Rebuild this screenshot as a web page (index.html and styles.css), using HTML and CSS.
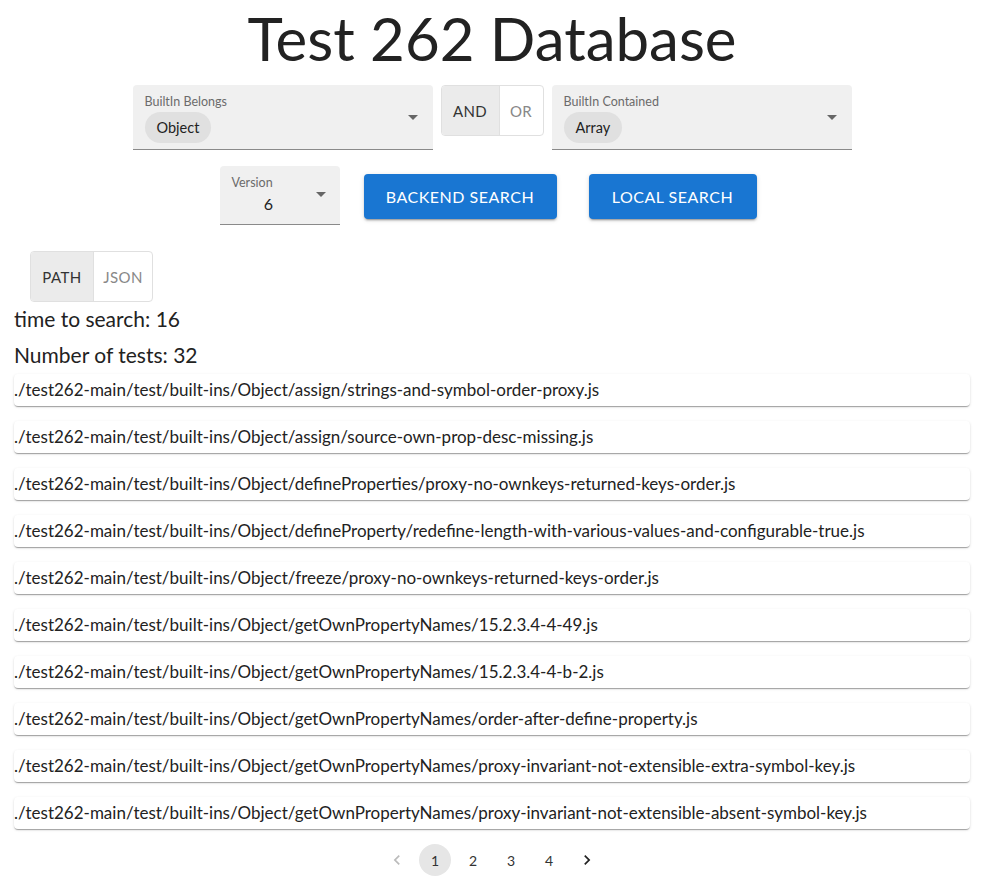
FILE: index.html
```html
<!DOCTYPE html>
<html>
<head>
<meta charset="utf-8">
<title>Test 262 Database</title>
<link rel="stylesheet" href="styles.css">
</head>
<body>
<div class="app">
  <h1 class="title">Test 262 Database</h1>

  <div class="row row-top">
    <div class="select wide">
      <div class="select-body">
        <span class="label">BuiltIn Belongs</span>
        <span class="chip">Object</span>
      </div>
      <span class="arrow"></span>
    </div>
    <div class="toggle">
      <span class="seg on">AND</span>
      <span class="seg">OR</span>
    </div>
    <div class="select wide">
      <div class="select-body">
        <span class="label">BuiltIn Contained</span>
        <span class="chip">Array</span>
      </div>
      <span class="arrow"></span>
    </div>
  </div>

  <div class="row row-second">
    <div class="select version">
      <div class="select-body">
        <span class="label">Version</span>
        <span class="value">6</span>
      </div>
      <span class="arrow"></span>
    </div>
    <button class="btn backend">Backend search</button>
    <button class="btn local">Local search</button>
  </div>

  <div class="toggle view-toggle">
    <span class="seg on">Path</span>
    <span class="seg">JSON</span>
  </div>

  <p class="stat stat-time">time to search: 16</p>
  <p class="stat stat-count">Number of tests: 32</p>

  <ul class="results">
    <li class="card">./test262-main/test/built-ins/Object/assign/strings-and-symbol-order-proxy.js</li>
    <li class="card">./test262-main/test/built-ins/Object/assign/source-own-prop-desc-missing.js</li>
    <li class="card">./test262-main/test/built-ins/Object/defineProperties/proxy-no-ownkeys-returned-keys-order.js</li>
    <li class="card">./test262-main/test/built-ins/Object/defineProperty/redefine-length-with-various-values-and-configurable-true.js</li>
    <li class="card">./test262-main/test/built-ins/Object/freeze/proxy-no-ownkeys-returned-keys-order.js</li>
    <li class="card">./test262-main/test/built-ins/Object/getOwnPropertyNames/15.2.3.4-4-49.js</li>
    <li class="card">./test262-main/test/built-ins/Object/getOwnPropertyNames/15.2.3.4-4-b-2.js</li>
    <li class="card">./test262-main/test/built-ins/Object/getOwnPropertyNames/order-after-define-property.js</li>
    <li class="card">./test262-main/test/built-ins/Object/getOwnPropertyNames/proxy-invariant-not-extensible-extra-symbol-key.js</li>
    <li class="card">./test262-main/test/built-ins/Object/getOwnPropertyNames/proxy-invariant-not-extensible-absent-symbol-key.js</li>
  </ul>

  <nav class="pagination">
    <span class="page nav disabled"><svg viewBox="0 0 24 24" width="20" height="20"><path d="M15.41 7.41 14 6l-6 6 6 6 1.41-1.41L10.83 12z" fill="currentColor"/></svg></span>
    <span class="page current">1</span>
    <span class="page">2</span>
    <span class="page">3</span>
    <span class="page">4</span>
    <span class="page nav"><svg viewBox="0 0 24 24" width="20" height="20"><path d="M10 6 8.59 7.41 13.17 12l-4.58 4.59L10 18l6-6z" fill="currentColor"/></svg></span>
  </nav>
</div>
</body>
</html>
```

FILE: styles.css
```css
* { box-sizing: border-box; }
html, body { margin: 0; padding: 0; background: #fff; }
body {
  font-family: Lato, "Noto Sans", sans-serif;
  color: #222;
}
.app { padding: 0 14px 0 14px; }

.title {
  margin: 0;
  padding-top: 0;
  height: 80px;
  text-align: center;
  font-weight: 400;
  font-size: 60px;
  line-height: 76px;
  color: #222;
}

.row {
  display: flex;
  justify-content: center;
  align-items: flex-start;
}
.row-top { gap: 8px; margin-top: 5px; }
.row-second { margin-top: 16px; }

.select {
  position: relative;
  background: #f0f0f0;
  border-radius: 4px 4px 0 0;
  border-bottom: 1px solid #8a8a8a;
}
.select.wide { width: 300px; height: 65px; }
.select-body {
  display: flex;
  flex-direction: column;
  align-items: flex-start;
  padding: 9px 12px 0 12px;
}
.label {
  font-size: 12.5px;
  color: #6b6b6b;
  line-height: 16px;
}
.chip {
  margin-top: 2px;
  height: 31px;
  line-height: 31px;
  padding: 0 12px;
  border-radius: 16px;
  background: #e0e0e0;
  font-size: 14.5px;
  color: #222;
}
.arrow {
  position: absolute;
  right: 15px;
  top: 30px;
  width: 0; height: 0;
  border-left: 5px solid transparent;
  border-right: 5px solid transparent;
  border-top: 5px solid #666;
}

.select.version { width: 120px; height: 59px; margin-right: 24px; }
.select.version .value {
  align-self: stretch;
  text-align: center;
  padding-right: 22px;
  font-size: 16px;
  line-height: 22px;
  margin-top: 2px;
}
.select.version .arrow { top: 26px; right: 14px; }

.toggle {
  display: inline-flex;
  border: 1px solid #e0e0e0;
  border-radius: 4px;
  overflow: hidden;
  height: 51px;
}
.toggle .seg {
  display: flex;
  align-items: center;
  justify-content: center;
  font-size: 15px;
  text-transform: uppercase;
  letter-spacing: 0.4px;
  color: #888;
}
.toggle .seg + .seg { border-left: 1px solid #e0e0e0; }
.toggle .seg.on { background: #ebebeb; color: #333; }
.row-top .toggle { width: 103px; }
.row-top .toggle .seg:first-child { width: 57px; }
.row-top .toggle .seg:last-child { flex: 1; }

.btn {
  height: 45px;
  margin-top: 8px;
  border: 0;
  border-radius: 4px;
  background: #1976d2;
  color: #fff;
  font-family: inherit;
  font-size: 16px;
  letter-spacing: 0.5px;
  text-transform: uppercase;
  box-shadow: 0 3px 1px -2px rgba(0,0,0,0.2), 0 2px 2px 0 rgba(0,0,0,0.14), 0 1px 5px 0 rgba(0,0,0,0.12);
}
.btn.backend { width: 193px; margin-right: 32px; }
.btn.local { width: 168px; margin-right: 8px; }

.view-toggle {
  margin: 26px 0 0 16px;
  width: 123px;
}
.view-toggle .seg:first-child { width: 62px; }
.view-toggle .seg:last-child { flex: 1; }

.stat {
  margin: 0;
  font-size: 21px;
  line-height: 24px;
  color: #222;
}
.stat-time { margin-top: 5px; }
.stat-count { margin-top: 12px; }

.results {
  list-style: none;
  margin: 7px 0 0 0;
  padding: 0;
  display: flex;
  flex-direction: column;
  gap: 15px;
}
.card {
  width: 956px;
  height: 32px;
  line-height: 31px;
  font-size: 17px;
  color: #222;
  background: #fff;
  border-radius: 4px;
  box-shadow: 0 2px 1px -1px rgba(0,0,0,0.2), 0 1px 1px 0 rgba(0,0,0,0.14), 0 1px 3px 0 rgba(0,0,0,0.12);
  white-space: nowrap;
}

.pagination {
  display: flex;
  justify-content: center;
  margin-top: 15px;
}
.page {
  width: 32px;
  height: 32px;
  margin: 0 3px;
  border-radius: 16px;
  display: flex;
  align-items: center;
  justify-content: center;
  font-size: 14px;
  color: #333;
}
.page.current { background: #e6e6e6; }
.page.nav { color: #222; }
.page.disabled { color: #bbb; }
```
